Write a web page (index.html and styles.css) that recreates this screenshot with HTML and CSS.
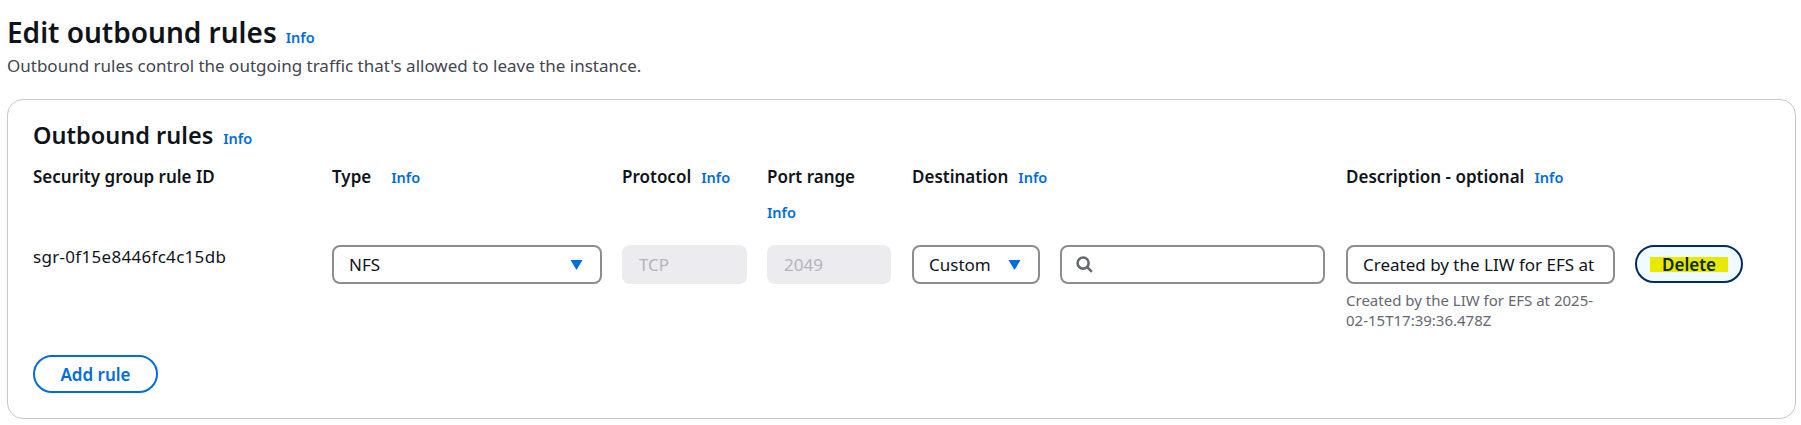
FILE: index.html
```html
<!DOCTYPE html>
<html lang="en">
<head>
    <meta charset="UTF-8">
    <title>Edit outbound rules</title>
    <link rel="stylesheet" href="styles.css">
</head>
<body>
<div class="page">
    <div class="title-row">
        <h1>Edit outbound rules</h1>
        <a class="info">Info</a>
    </div>
    <p class="subtitle">Outbound rules control the outgoing traffic that's allowed to leave the instance.</p>

    <div class="card">
        <div class="card-head">
            <h2>Outbound rules</h2>
            <a class="info">Info</a>
        </div>

        <div class="rules">
            <div class="label">Security group rule ID</div>
            <div class="label label-wide"><b>Type</b> <a class="info">Info</a></div>
            <div class="label"><b>Protocol</b> <a class="info">Info</a></div>
            <div class="label label-port"><b>Port range</b> <a class="info">Info</a></div>
            <div class="label"><b>Destination</b> <a class="info">Info</a></div>
            <div class="label"><b>Description - optional</b> <a class="info">Info</a></div>
            <div></div>

            <div class="rule-id">sgr-0f15e8446fc4c15db</div>
            <div class="field select select-type">
                <span>NFS</span>
                <svg class="caret" viewBox="0 0 12 10"><path d="M0 0h12L6 10z"/></svg>
            </div>
            <div class="field disabled field-protocol">TCP</div>
            <div class="field disabled field-port">2049</div>
            <div class="dest">
                <div class="field select select-dest">
                    <span>Custom</span>
                    <svg class="caret" viewBox="0 0 12 10"><path d="M0 0h12L6 10z"/></svg>
                </div>
                <div class="field search">
                    <svg class="glass" viewBox="0 0 16 16"><circle cx="6.7" cy="6.7" r="5.2"/><path d="M10.5 10.5 15 15"/></svg>
                </div>
            </div>
            <div class="desc">
                <div class="field desc-input">Created by the LIW for EFS at</div>
                <div class="help">Created by the LIW for EFS at 2025-02-15T17:39:36.478Z</div>
            </div>
            <div class="btn btn-delete"><span class="mark">Delete</span></div>
        </div>

        <div class="btn btn-add">Add rule</div>
    </div>
</div>
</body>
</html>
```

FILE: styles.css
```css
* { box-sizing: border-box; }
body { margin: 0; background: #fff; color: #0f141a; font-family: "Noto Sans", Roboto, sans-serif; font-size: 17px; }
b { font-weight: 600; }
.page { padding: 14px 5px 6px 7px; }
.title-row { display: flex; align-items: baseline; gap: 9px; }
h1 { margin: 0; font-size: 28px; line-height: 36px; font-weight: 600; }
h2 { margin: 0; font-size: 23.5px; line-height: 30px; font-weight: 600; }
.subtitle { margin: 5px 0 0; line-height: 22px; color: #424650; }
.info { color: #006ce0; font-size: 14.5px; font-weight: 600; }

.card { margin-top: 22px; height: 320px; padding: 20px 25px; border: 1px solid #c6c6cd; border-radius: 16px; }
.card-head { display: flex; align-items: baseline; gap: 10px; }

.rules { display: grid; grid-template-columns: 299px 290px 145px 145px 434px 289px 108px; margin-top: 17px; }
.label { display: flex; flex-wrap: wrap; align-items: baseline; column-gap: 10px; row-gap: 15px; align-content: flex-start; font-size: 17px; font-weight: 600; line-height: 20px; }
.label-wide { column-gap: 20px; }
.label-port { height: 78px; width: 124px; }

.rule-id { line-height: 24px; letter-spacing: .3px; }
.field { display: flex; align-items: center; height: 39px; padding: 0 15px; border: 2px solid #8c8c94; border-radius: 8px; background: #fff; }
.select { justify-content: space-between; }
.select-type { width: 270px; padding-right: 17px; }
.select-dest { width: 128px; padding-right: 17px; }
.caret { width: 13px; height: 10px; fill: #006ce0; }
.disabled { border: none; padding: 0 17px; background: #ebebf0; color: #b4b4bb; }
.field-protocol { width: 125px; }
.field-port { width: 124px; }
.dest { display: flex; gap: 20px; }
.search { width: 265px; padding: 0 14px; }
.glass { width: 17px; height: 17px; fill: none; stroke: #656871; stroke-width: 2.4; }
.desc { width: 269px; }
.desc-input { white-space: nowrap; overflow: hidden; }
.help { width: 262px; margin-top: 6px; font-size: 15px; line-height: 20px; color: #656871; }

.btn { display: flex; align-items: center; justify-content: center; height: 38px; border-radius: 20px; border: 2px solid #006ce0; font-weight: 600; }
.btn-delete { background: #f0fbff; border-color: #002a66; }
.mark { padding: 0 12px; line-height: 15px; background: #e8e800; color: #0a2a00; }
.btn-add { width: 125px; margin-top: 25px; color: #006ce0; }
```
